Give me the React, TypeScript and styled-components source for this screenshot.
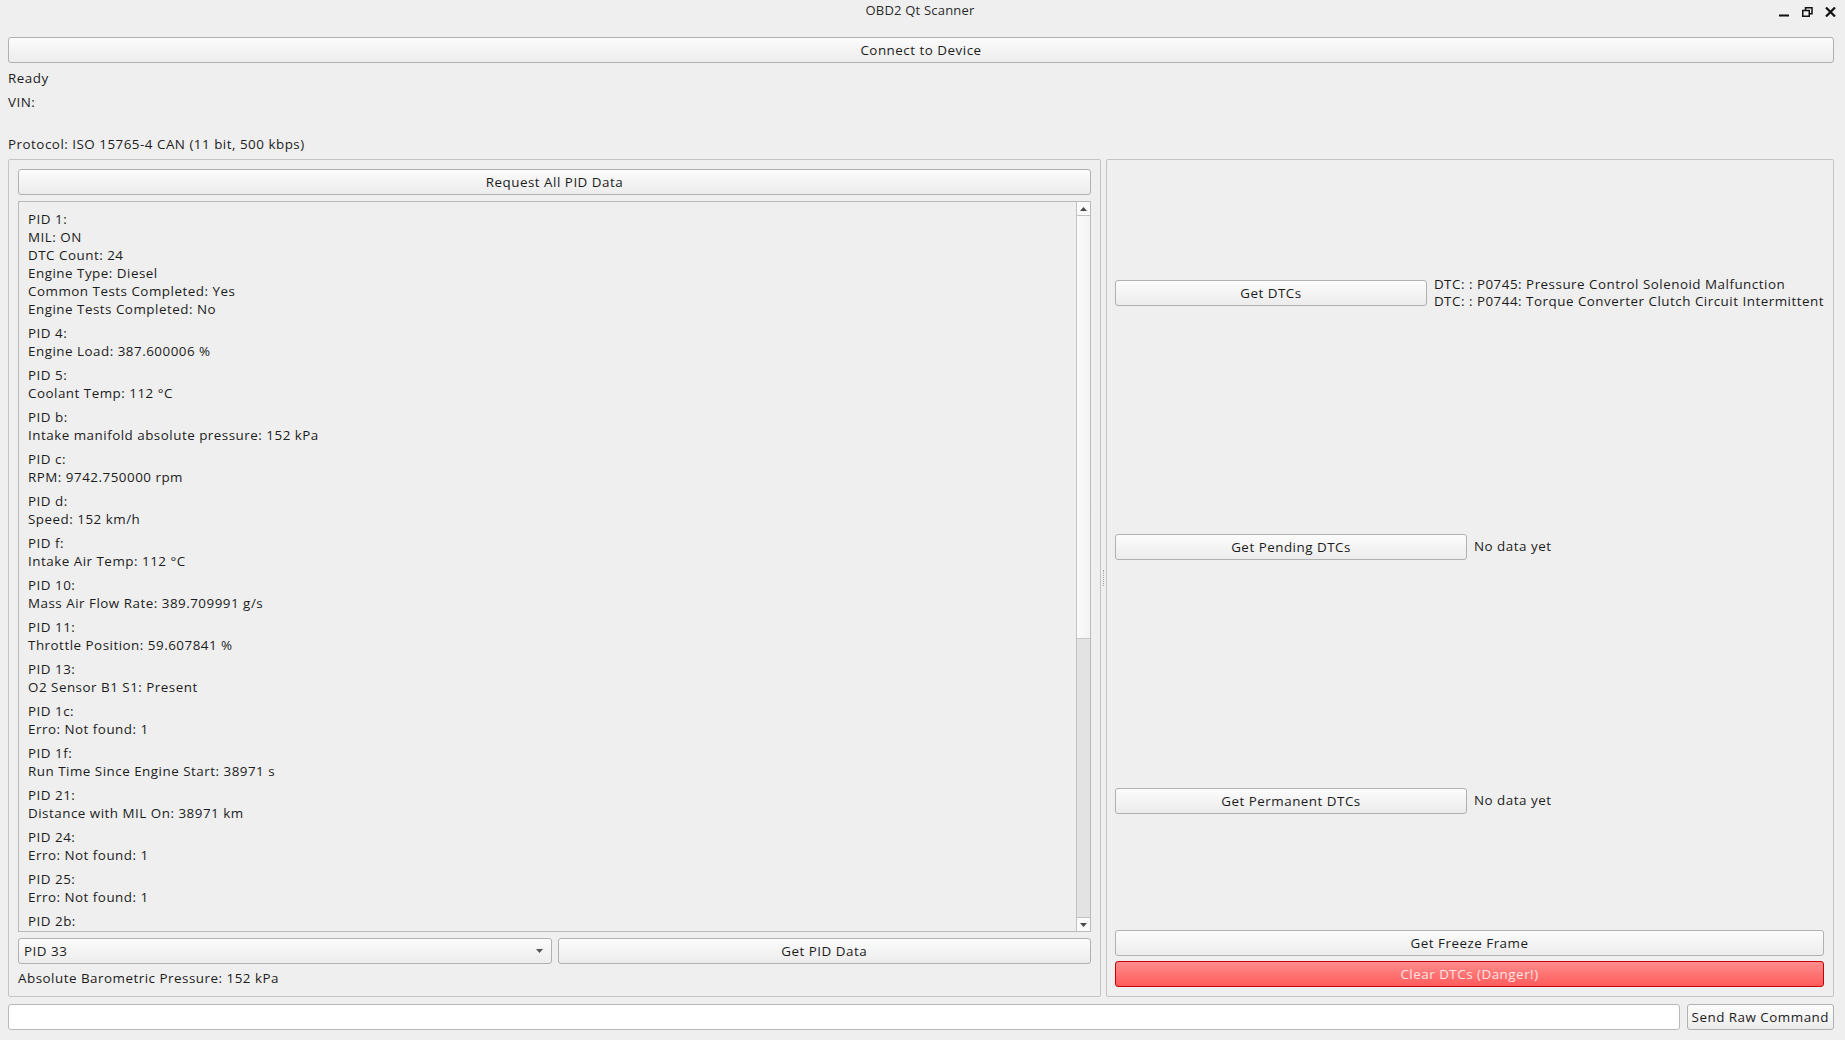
import React from "react";
import styled, { createGlobalStyle } from "styled-components";

const Global = createGlobalStyle`
  html, body { margin: 0; padding: 0; background: #efefef; }
  body {
    font-family: "Open Sans", "Noto Sans", sans-serif;
    font-size: 13.4px;
    letter-spacing: 0.5px;
    color: #1c1c1c;
  }
  #root { width: 1845px; height: 1040px; }
  * { box-sizing: border-box; }
`;

const Window = styled.div`
  width: 1845px;
  height: 1040px;
  display: flex;
  flex-direction: column;
  background: #efefef;
  overflow: hidden;
`;

const TitleBar = styled.div`
  flex: 0 0 28px;
  display: grid;
  grid-template-columns: 1fr auto 1fr;
  align-items: start;
`;

const Title = styled.div`
  grid-column: 2;
  font-size: 13px;
  letter-spacing: 0.2px;
  line-height: 20px;
  color: #2a2a2a;
  margin-left: -5px;
`;

const Controls = styled.div`
  grid-column: 3;
  justify-self: end;
  display: flex;
  gap: 12px;
  padding: 7px 9px 0 0;
`;

const Body = styled.div`
  flex: 1;
  min-height: 0;
  display: flex;
  flex-direction: column;
  gap: 7px;
  padding: 9px 11px 10px 8px;
`;

const Button = styled.button<{ $danger?: boolean; $grow?: boolean }>`
  height: 26px;
  flex: ${(p) => (p.$grow ? "1 1 0" : "0 0 auto")};
  min-width: 0;
  padding: ${(p) => (p.$grow ? "0" : "0 4px")};
  font: inherit;
  letter-spacing: inherit;
  color: ${(p) => (p.$danger ? "#ffe4e4" : "#1c1c1c")};
  border: 1px solid ${(p) => (p.$danger ? "#c40000" : "#b1b1b1")};
  border-radius: 3px;
  background: ${(p) =>
    p.$danger
      ? "linear-gradient(#ff8d8d, #ff5b5b)"
      : "linear-gradient(#fcfcfc, #ececec)"};
  text-align: center;
  white-space: nowrap;
  cursor: default;
`;

const InfoLabel = styled.div<{ $height: number }>`
  height: ${(p) => p.$height}px;
  line-height: 17px;
`;

const Panels = styled.div`
  flex: 1;
  min-height: 0;
  display: grid;
  grid-template-columns: 1093px 5px 1fr;
`;

const GroupBox = styled.div<{ $pad: string; $gap: number }>`
  border: 1px solid #c4c4c4;
  border-radius: 2px;
  padding: ${(p) => p.$pad};
  display: flex;
  flex-direction: column;
  gap: ${(p) => p.$gap}px;
  min-height: 0;
`;

const Splitter = styled.div`
  display: flex;
  align-items: center;
  justify-content: center;
`;

const SplitterDots = styled.div`
  width: 1px;
  height: 16px;
  border-left: 1px dotted #a5a5a5;
`;

const TextArea = styled.div`
  flex: 1;
  min-height: 0;
  display: flex;
  border: 1px solid #bababa;
  background: #efefef;
`;

const TextContent = styled.div`
  flex: 1;
  min-width: 0;
  overflow: hidden;
  padding: 8px 8px 0 9px;
`;

const Block = styled.div`
  margin-bottom: 6px;
`;

const Line = styled.div`
  line-height: 18px;
  white-space: nowrap;
`;

const ScrollBar = styled.div`
  flex: 0 0 14px;
  display: flex;
  flex-direction: column;
  border-left: 1px solid #c2c2c2;
  background: #e3e3e3;
`;

const ScrollArrow = styled.div<{ $down?: boolean }>`
  flex: 0 0 14px;
  display: flex;
  align-items: center;
  justify-content: center;
  background: #fafafa;
  border-${(p) => (p.$down ? "top" : "bottom")}: 1px solid #c2c2c2;
  margin-top: ${(p) => (p.$down ? "auto" : "0")};
`;

const ScrollThumb = styled.div`
  flex: 0 0 423px;
  background: linear-gradient(90deg, #fbfbfb, #f3f3f3);
  border-bottom: 1px solid #c8c8c8;
`;

const HalfRow = styled.div`
  display: grid;
  grid-template-columns: 1fr 1fr;
  gap: 6px;
`;

const StretchRow = styled.div`
  flex: 1 1 0;
  min-height: 0;
  display: flex;
  align-items: center;
  gap: 7px;
`;

const Combo = styled.div`
  height: 26px;
  display: flex;
  align-items: center;
  justify-content: space-between;
  padding: 0 8px 0 5px;
  border: 1px solid #b1b1b1;
  border-radius: 3px;
  background: linear-gradient(#fcfcfc, #ececec);
`;

const ResultLabel = styled.div`
  height: 17px;
  line-height: 17px;
`;

const DtcLabel = styled.div`
  flex: 1 1 0;
  white-space: nowrap;
  line-height: 17px;
`;

const LineEdit = styled.div`
  flex: 1;
  height: 26px;
  background: #ffffff;
  border: 1px solid #b9b9b9;
  border-radius: 3px;
`;

const BottomRow = styled.div`
  display: flex;
  gap: 7px;
  height: 26px;
`;

const ArrowDown = ({ color = "#4a4a4a" }: { color?: string }) => (
  <svg width="7" height="4" viewBox="0 0 7 4">
    <polygon points="0,0 7,0 3.5,4" fill={color} />
  </svg>
);

const ArrowUp = () => (
  <svg width="7" height="4" viewBox="0 0 7 4">
    <polygon points="0,4 7,4 3.5,0" fill="#4a4a4a" />
  </svg>
);

const pidData: string[][] = [
  ["PID 1:", "MIL: ON", "DTC Count: 24", "Engine Type: Diesel", "Common Tests Completed: Yes", "Engine Tests Completed: No"],
  ["PID 4:", "Engine Load: 387.600006 %"],
  ["PID 5:", "Coolant Temp: 112 °C"],
  ["PID b:", "Intake manifold absolute pressure: 152 kPa"],
  ["PID c:", "RPM: 9742.750000 rpm"],
  ["PID d:", "Speed: 152 km/h"],
  ["PID f:", "Intake Air Temp: 112 °C"],
  ["PID 10:", "Mass Air Flow Rate: 389.709991 g/s"],
  ["PID 11:", "Throttle Position: 59.607841 %"],
  ["PID 13:", "O2 Sensor B1 S1: Present"],
  ["PID 1c:", "Erro: Not found: 1"],
  ["PID 1f:", "Run Time Since Engine Start: 38971 s"],
  ["PID 21:", "Distance with MIL On: 38971 km"],
  ["PID 24:", "Erro: Not found: 1"],
  ["PID 25:", "Erro: Not found: 1"],
  ["PID 2b:"],
];

export default function App() {
  return (
    <Window>
      <Global />
      <TitleBar>
        <Title>OBD2 Qt Scanner</Title>
        <Controls>
          <svg width="11" height="10" viewBox="0 0 11 10">
            <rect x="0" y="7.5" width="10" height="2" fill="#111" />
          </svg>
          <svg width="11" height="10" viewBox="0 0 11 10">
            <rect x="3.5" y="0.75" width="6.5" height="6" fill="none" stroke="#111" strokeWidth="1.5" />
            <rect x="0.75" y="3.5" width="6.5" height="5.75" fill="#efefef" stroke="#111" strokeWidth="1.5" />
          </svg>
          <svg width="11" height="10" viewBox="0 0 11 10">
            <path d="M1 0.5 L10 9.5 M10 0.5 L1 9.5" stroke="#111" strokeWidth="2.2" />
          </svg>
        </Controls>
      </TitleBar>
      <Body>
        <Button>Connect to Device</Button>
        <InfoLabel $height={17}>Ready</InfoLabel>
        <InfoLabel $height={35}>VIN:</InfoLabel>
        <InfoLabel $height={16}>Protocol: ISO 15765-4 CAN (11 bit, 500 kbps)</InfoLabel>
        <Panels>
          <GroupBox $pad="9px 9px 9px 9px" $gap={6}>
            <Button>Request All PID Data</Button>
            <TextArea>
              <TextContent>
                {pidData.map((block, i) => (
                  <Block key={i}>
                    {block.map((l, j) => (
                      <Line key={j}>{l}</Line>
                    ))}
                  </Block>
                ))}
              </TextContent>
              <ScrollBar>
                <ScrollArrow>
                  <ArrowUp />
                </ScrollArrow>
                <ScrollThumb />
                <ScrollArrow $down>
                  <ArrowDown />
                </ScrollArrow>
              </ScrollBar>
            </TextArea>
            <HalfRow>
              <Combo>
                <span>PID 33</span>
                <ArrowDown color="#555" />
              </Combo>
              <Button>Get PID Data</Button>
            </HalfRow>
            <ResultLabel>Absolute Barometric Pressure: 152 kPa</ResultLabel>
          </GroupBox>
          <Splitter>
            <SplitterDots />
          </Splitter>
          <GroupBox $pad="8px 9px 9px 8px" $gap={5}>
            <StretchRow>
              <Button $grow>Get DTCs</Button>
              <DtcLabel>
                <div>DTC: : P0745: Pressure Control Solenoid Malfunction</div>
                <div>DTC: : P0744: Torque Converter Clutch Circuit Intermittent</div>
              </DtcLabel>
            </StretchRow>
            <StretchRow>
              <Button $grow>Get Pending DTCs</Button>
              <DtcLabel>No data yet</DtcLabel>
            </StretchRow>
            <StretchRow>
              <Button $grow>Get Permanent DTCs</Button>
              <DtcLabel>No data yet</DtcLabel>
            </StretchRow>
            <Button>Get Freeze Frame</Button>
            <Button $danger>Clear DTCs (Danger!)</Button>
          </GroupBox>
        </Panels>
        <BottomRow>
          <LineEdit />
          <Button>Send Raw Command</Button>
        </BottomRow>
      </Body>
    </Window>
  );
}
